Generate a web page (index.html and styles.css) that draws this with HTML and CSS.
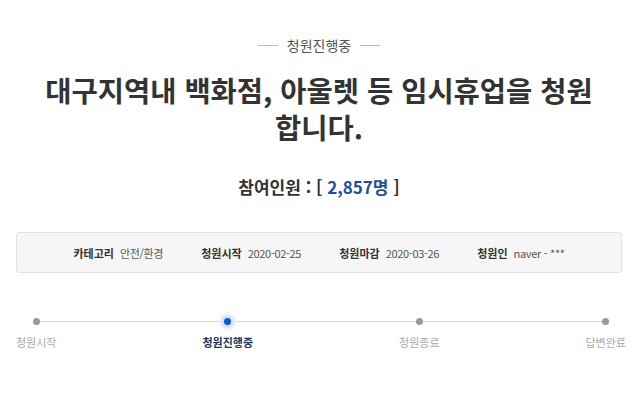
FILE: index.html
```html
<!DOCTYPE html>
<html lang="ko">
<head>
<meta charset="utf-8">
<link rel="stylesheet" href="styles.css">
</head>
<body>
<div class="page">
  <div class="status"><span class="dash"></span><span class="status-text">청원진행중</span><span class="dash"></span></div>
  <h1 class="title">대구지역내 백화점, 아울렛 등 임시휴업을 청원<br>합니다.</h1>
  <div class="count">참여인원 : [ <span class="num">2,857명</span> ]</div>
  <div class="info">
    <div class="item"><span class="label">카테고리</span><span class="value">안전/환경</span></div>
    <div class="item"><span class="label">청원시작</span><span class="value">2020-02-25</span></div>
    <div class="item"><span class="label">청원마감</span><span class="value">2020-03-26</span></div>
    <div class="item"><span class="label">청원인</span><span class="value">naver - ***</span></div>
  </div>
  <div class="steps">
    <div class="track"></div>
    <div class="step"><span class="dot"></span><span class="step-label">청원시작</span></div>
    <div class="step active"><span class="dot"></span><span class="step-label">청원진행중</span></div>
    <div class="step"><span class="dot"></span><span class="step-label">청원종료</span></div>
    <div class="step"><span class="dot"></span><span class="step-label">답변완료</span></div>
  </div>
</div>
</body>
</html>
```
FILE: styles.css
```css
* { box-sizing: border-box; }
html, body { margin: 0; padding: 0; background: #fff; }
body {
  font-family: "Noto Sans CJK KR", "Noto Sans", sans-serif;
  color: #333;
  width: 640px;
  height: 402px;
  overflow: hidden;
}
.page { padding: 35px 18px 0 16px; }
.status {
  display: flex;
  justify-content: center;
  align-items: center;
  gap: 9px;
  height: 20px;
  color: #555;
  font-size: 14px;
}
.dash { width: 20px; height: 1px; background: #bbb; }
.title {
  margin: 16px 0 0;
  text-align: center;
  font-size: 28.5px;
  line-height: 37px;
  font-weight: 700;
  color: #333;
}
.count {
  margin-top: 30px;
  text-align: center;
  font-size: 17px;
  line-height: 24px;
  font-weight: 700;
  color: #333;
}
.num { color: #1f4e9b; }
.info {
  margin-top: 33px;
  height: 41px;
  background: #f6f6f6;
  border: 1px solid #e2e2e2;
  border-radius: 3px;
  display: flex;
  justify-content: center;
  align-items: center;
  gap: 38px;
  font-size: 11px;
}
.item { display: flex; gap: 6px; align-items: center; }
.label { font-weight: 700; color: #333; }
.value { color: #555; letter-spacing: -0.3px; }
.steps {
  position: relative;
  margin-top: 43px;
  margin-right: -4px;
  display: flex;
  justify-content: space-between;
}
.track {
  position: absolute;
  left: 21px;
  right: 20px;
  top: 5px;
  height: 1px;
  background: #d6d6d6;
}
.step {
  position: relative;
  display: flex;
  flex-direction: column;
  align-items: center;
}
.dot {
  width: 7px;
  height: 7px;
  margin-top: 2px;
  border-radius: 50%;
  background: #999;
}
.step-label {
  margin-top: 9px;
  font-size: 11px;
  line-height: 16px;
  color: #aaa;
}
.step.active .dot {
  background: #0b5cc7;
  box-shadow: 0 0 0 3px #d3e3fa, 0 0 4px 5px #e8f0fc;
}
.step.active .step-label { color: #1a355e; font-weight: 700; }
```
